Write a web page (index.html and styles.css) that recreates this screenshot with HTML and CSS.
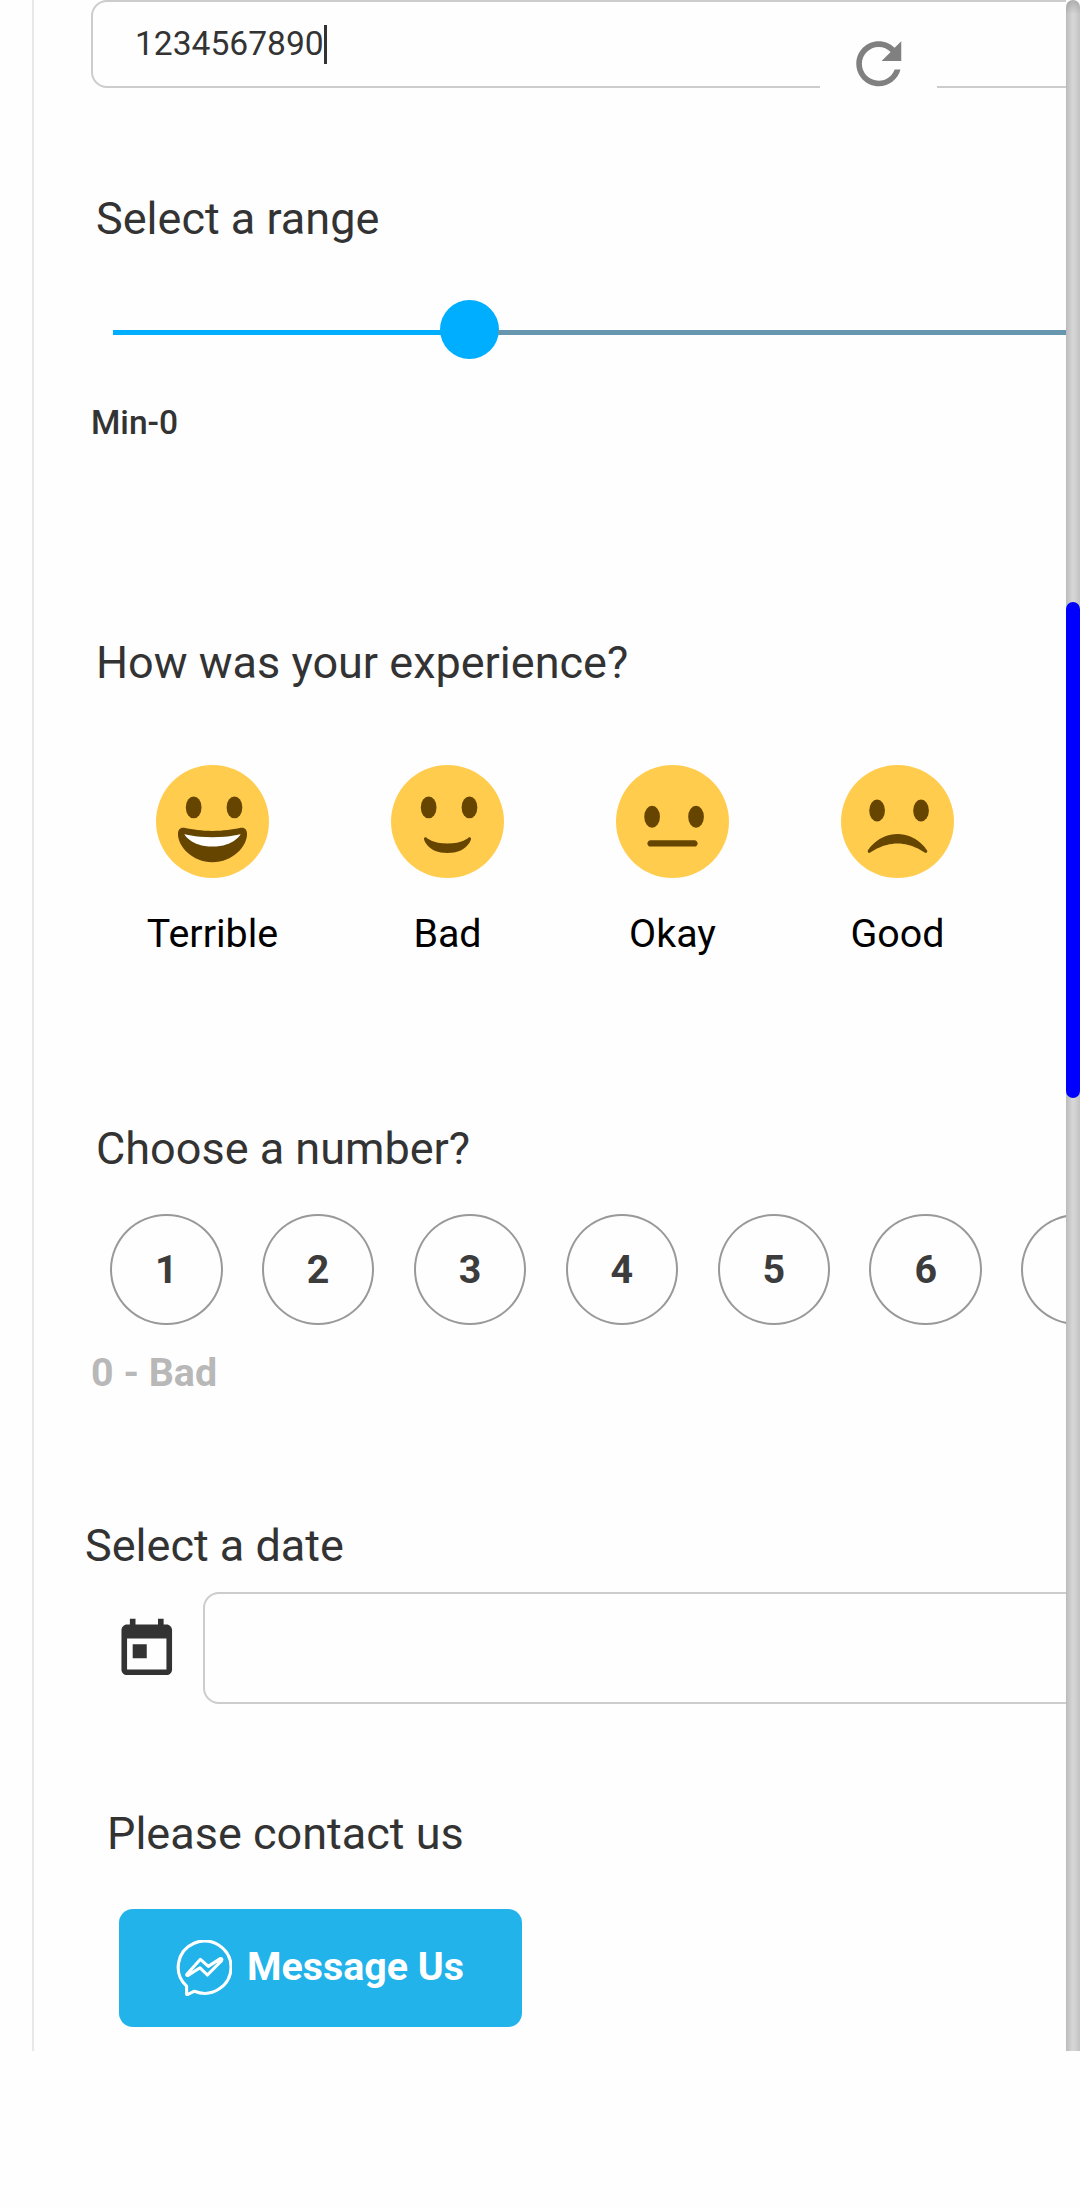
FILE: index.html
```html
<!DOCTYPE html>
<html lang="en">
<head>
<meta charset="utf-8">
<title>Survey form</title>
<link rel="stylesheet" href="styles.css">
</head>
<body>
<div class="viewport">
  <main class="form">
    <div class="captcha">
      <div class="captcha-input">1234567890<span class="caret"></span></div>
      <button class="captcha-refresh" aria-label="Refresh">
        <svg class="icon" viewBox="0 0 24 24"><path d="M17.65 6.35C16.2 4.9 14.21 4 12 4c-4.42 0-7.99 3.58-7.99 8s3.57 8 7.99 8c3.73 0 6.84-2.55 7.73-6h-2.08c-.82 2.33-3.04 4-5.65 4-3.31 0-6-2.69-6-6s2.69-6 6-6c1.66 0 3.14.69 4.22 1.78L13 11h7V4l-2.35 2.35z"/></svg>
      </button>
    </div>

    <section class="range">
      <h2 class="title">Select a range</h2>
      <div class="slider">
        <div class="slider-fill"></div>
        <div class="slider-thumb"></div>
        <div class="slider-rest"></div>
      </div>
      <div class="range-min">Min-0</div>
    </section>

    <section class="experience">
      <h2 class="title">How was your experience?</h2>
      <div class="faces">
        <div class="face face-first">
          <svg class="emoji" viewBox="0 0 36 36"><circle class="skin" cx="18" cy="18" r="18"/><ellipse cx="12" cy="13.5" rx="2.5" ry="3.5"/><ellipse cx="25" cy="13.5" rx="2.5" ry="3.5"/><path d="M18 21c-3.623 0-6.027-.422-9-1-.679-.131-2 0-2 2 0 4 4.595 9 11 9 6.404 0 11-5 11-9 0-2-1.321-2.132-2-2-2.973.578-5.377 1-9 1z"/><path class="teeth" d="M9 22s3 1 9 1 9-1 9-1-2 4-9 4-9-4-9-4z"/></svg>
          <span>Terrible</span>
        </div>
        <div class="face">
          <svg class="emoji" viewBox="0 0 36 36"><circle class="skin" cx="18" cy="18" r="18"/><ellipse cx="12" cy="13.5" rx="2.5" ry="3.5"/><ellipse cx="25" cy="13.5" rx="2.5" ry="3.5"/><path d="M10.515 23.621C10.56 23.8 11.683 28 18 28c6.318 0 7.44-4.2 7.485-4.379.055-.217-.043-.442-.237-.554-.195-.111-.439-.078-.6.077C24.629 23.163 22.694 25 18 25s-6.63-1.837-6.648-1.855C11.256 23.05 11.128 23 11 23c-.084 0-.169.021-.246.064-.196.112-.294.339-.239.557z"/></svg>
          <span>Bad</span>
        </div>
        <div class="face">
          <svg class="emoji" viewBox="0 0 36 36"><circle class="skin" cx="18" cy="18" r="18"/><ellipse cx="11.5" cy="16.5" rx="2.5" ry="3.5"/><ellipse cx="25.5" cy="16.5" rx="2.5" ry="3.5"/><path d="M25 26H11c-.552 0-1-.447-1-1s.448-1 1-1h14c.553 0 1 .447 1 1s-.447 1-1 1z"/></svg>
          <span>Okay</span>
        </div>
        <div class="face">
          <svg class="emoji" viewBox="0 0 36 36"><circle class="skin" cx="18" cy="18" r="18"/><ellipse cx="11.5" cy="14.5" rx="2.5" ry="3.5"/><ellipse cx="25.5" cy="14.5" rx="2.5" ry="3.5"/><path d="M8.665 27.871c.178.161.444.171.635.029.039-.029 3.922-2.9 8.7-2.9 4.766 0 8.662 2.871 8.7 2.9.191.142.457.13.635-.029.177-.16.217-.424.094-.628C27.3 27.029 24.212 22 18 22s-9.301 5.028-9.429 5.243c-.123.205-.084.468.094.628z"/></svg>
          <span>Good</span>
        </div>
      </div>
    </section>

    <section class="number">
      <h2 class="title">Choose a number?</h2>
      <div class="numbers">
        <div class="num">1</div>
        <div class="num">2</div>
        <div class="num">3</div>
        <div class="num">4</div>
        <div class="num">5</div>
        <div class="num">6</div>
        <div class="num"></div>
      </div>
      <div class="number-hint">0 - Bad</div>
    </section>

    <section class="date">
      <h2 class="title title-date">Select a date</h2>
      <div class="date-row">
        <svg class="icon icon-dark" viewBox="0 0 24 24"><path d="M19 3h-1V1h-2v2H8V1H6v2H5c-1.11 0-1.99.9-1.99 2L3 19c0 1.1.89 2 2 2h14c1.1 0 2-.9 2-2V5c0-1.1-.9-2-2-2zm0 16H5V8h14v11zM7 10h5v5H7z"/></svg>
        <div class="date-input"></div>
      </div>
    </section>

    <section class="contact">
      <h2 class="title title-contact">Please contact us</h2>
      <button class="message">
        <svg class="messenger" viewBox="0 0 56 56"><path d="M10.6 46.2A26.4 26.1 0 1 1 18.4 51.2L11.4 54.6Q10.6 54.8 10.6 54Z"/><path d="M10.9 34.2L24.4 19.3L32.3 26.4L44.3 18.6Q46.6 18.4 45.6 20.6L31.4 35L24 27.8L12 35.4Q10.2 35.8 10.9 34.2Z"/></svg>
        <span class="message-label">Message Us</span>
      </button>
    </section>
  </main>
  <div class="scrollbar"><div class="scrollbar-thumb"></div></div>
</div>
</body>
</html>
```
FILE: styles.css
```css
* {
  box-sizing: border-box;
}

body {
  margin: 0;
  background: #fefefe;
  color: #333;
  font-family: Roboto, "Liberation Sans", sans-serif;
  overflow: hidden;
}

button {
  border: 0;
  padding: 0;
  font-family: inherit;
}

.viewport {
  display: flex;
  height: 2051px;
  padding-left: 32px;
}

.form {
  flex: 1;
  min-width: 0;
  overflow: hidden;
  border-left: 2px solid #e8e8e8;
}

.title {
  margin: 0 0 0 62px;
  font-size: 45px;
  font-weight: 400;
  line-height: 54px;
}

/* Captcha */
.captcha {
  position: relative;
  height: 88px;
  margin-left: 57px;
}

.captcha-input {
  display: flex;
  align-items: center;
  width: 1100px;
  height: 88px;
  padding: 0 0 2px 42px;
  border: 2px solid #ccc;
  border-radius: 16px;
  font-size: 33.6px;
}

.caret {
  width: 3px;
  height: 39px;
  margin-top: 2px;
  background: #333;
}

.captcha-refresh {
  position: absolute;
  left: 729px;
  top: 5px;
  display: flex;
  align-items: center;
  justify-content: center;
  width: 117px;
  height: 117px;
  background: #fefefe;
}

.icon {
  flex: none;
  width: 67.5px;
  height: 67.5px;
  fill: #808080;
}

/* Range */
.range {
  padding-top: 104px;
}

.slider {
  display: flex;
  align-items: center;
  height: 59px;
  margin: 54px 0 0 79px;
}

.slider-fill {
  width: 328px;
  height: 5px;
  margin-top: 6px;
  background: #00aeff;
}

.slider-thumb {
  width: 59px;
  height: 59px;
  margin: 0 -1px;
  border-radius: 50%;
  background: #00aeff;
}

.slider-rest {
  flex: 1;
  height: 5px;
  margin-top: 6px;
  background: #6697ae;
}

.range-min {
  margin: 44px 0 0 57px;
  font-size: 33.6px;
  font-weight: 500;
  line-height: 40px;
}

/* Experience */
.experience {
  padding-top: 193px;
}

.faces {
  display: flex;
  margin: 75px 0 0 94px;
}

.face {
  display: flex;
  flex-direction: column;
  align-items: center;
  gap: 33px;
  width: 225px;
  color: #000;
  font-size: 39.4px;
  line-height: 46px;
}

.face-first {
  width: 169px;
  margin-right: 38px;
}

.emoji {
  width: 113px;
  height: 113px;
  fill: #664500;
}

.emoji .skin {
  fill: #ffcc4d;
}

.emoji .teeth {
  fill: #fff;
}

/* Numbers */
.number {
  padding-top: 165px;
}

.numbers {
  display: flex;
  gap: 39.4px;
  margin: 38px 0 0 76px;
}

.num {
  display: flex;
  flex: none;
  align-items: center;
  justify-content: center;
  width: 112.5px;
  height: 111px;
  border: 2px solid #999;
  border-radius: 50%;
  color: #3c3c3c;
  font-size: 39.4px;
  font-weight: 700;
}

.number-hint {
  margin: 25px 0 0 57px;
  color: #b8b8b8;
  font-size: 39.4px;
  font-weight: 700;
  line-height: 46px;
}

/* Date */
.date {
  padding-top: 123px;
}

.title-date {
  margin-left: 51px;
}

.date-row {
  display: flex;
  align-items: center;
  gap: 22.5px;
  margin: 19px 0 0 79px;
}

.icon-dark {
  margin-top: 3px;
  fill: #333;
}

.date-input {
  flex: none;
  width: 1000px;
  height: 112px;
  border: 2px solid #ccc;
  border-radius: 16px;
}

/* Contact */
.contact {
  padding-top: 103px;
}

.title-contact {
  margin-left: 73px;
}

.message {
  display: flex;
  align-items: center;
  gap: 15px;
  width: 403px;
  height: 118px;
  margin: 48px 0 0 85px;
  padding-left: 57px;
  border-radius: 14px;
  background: #22b3ea;
  color: #fff;
  font-size: 39.4px;
  font-weight: 700;
}

.message-label {
  padding-bottom: 3px;
}

.messenger {
  flex: none;
  width: 56px;
  height: 56px;
  fill: none;
  stroke: #fff;
  stroke-width: 3.1;
  stroke-linejoin: round;
}

/* Scrollbar */
.scrollbar {
  width: 14px;
  padding-top: 602px;
  border-radius: 8px 8px 0 0;
  background:
    linear-gradient(rgba(128, 128, 128, 0.45), transparent 14px),
    linear-gradient(90deg, #bbb, #d5d5d5 45%, #d5d5d5 60%, #c2c2c2);
}

.scrollbar-thumb {
  height: 496px;
  border-radius: 8px;
  background: #00f;
}
```
